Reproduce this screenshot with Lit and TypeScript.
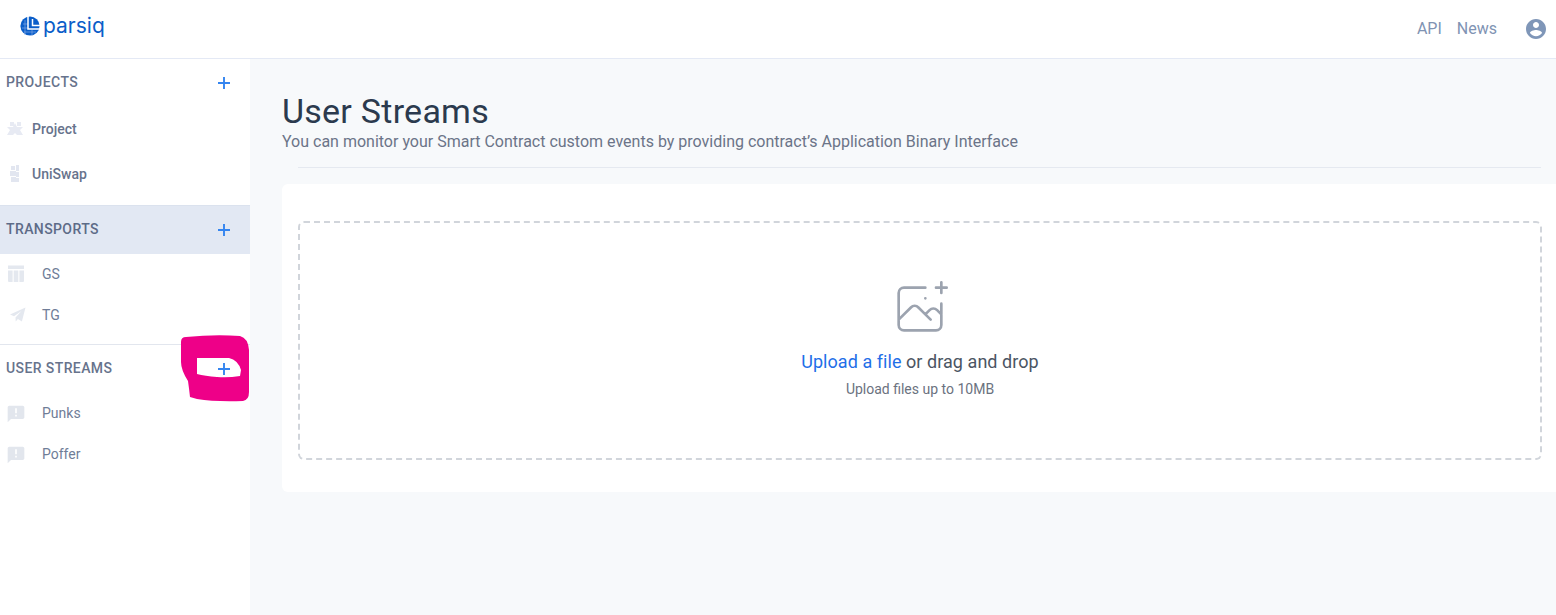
import { LitElement, html, css, svg } from "lit";
import { customElement } from "lit/decorators.js";

const plus = html`<svg class="plus" viewBox="0 0 14 14" width="14" height="14"><path d="M7 1v12M1 7h12" stroke="#3485f0" stroke-width="1.9" fill="none"/></svg>`;

const alertIcon = html`<svg class="ico alert" viewBox="0 0 24 24" width="20" height="20"><path fill="#e2e6ed" d="M20 2H4c-1.1 0-1.99.9-1.99 2L2 22l4-4h14c1.1 0 2-.9 2-2V4c0-1.1-.9-2-2-2zm-7 9h-2V5h2v6zm0 4h-2v-2h2v2z"/></svg>`;

const tableIcon = html`<svg class="ico" viewBox="0 0 20 20" width="20" height="20"><path fill="#e4e8ef" d="M2 1.5h16v3.5H2zM2 6.5h4.6V18H3a1 1 0 0 1-1-1zM7.7 6.5h4.6V18H7.7zM13.4 6.5H18V17a1 1 0 0 1-1 1h-3.6z"/></svg>`;

const planeIcon = html`<svg class="ico" viewBox="0 0 20 20" width="20" height="20"><path fill="#e4e8ef" d="M19.5 2.5 4 9.5l4 1.8L15.5 6l-6 6.6.2 4 2.2-2.6 4 2.4z"/></svg>`;

const puzzleIcon = html`<svg class="pico" viewBox="0 0 20 20" width="20" height="20"><g fill="#e7eaf3"><path d="M2 8h6l2-4 2 4h6l-3 3 3 5h-6l-2-2-2 2H2l3-5z"/><rect x="5" y="3" width="4" height="4"/><rect x="12" y="3" width="4" height="4"/></g></svg>`;

const swapIcon = html`<svg class="pico" viewBox="0 0 20 20" width="20" height="20"><g fill="#e2e6f0"><path d="M6 2h4v4H6zM11 1h3v6h-3zM5 7h6v5H5zM11 8h3v5h-3zM6 13h5v5H6zM11 14h3v4h-3z"/></g></svg>`;

@customElement("app-root")
export class AppRoot extends LitElement {
  static styles = css`
    :host {
      display: flex;
      flex-direction: column;
      height: 100vh;
      overflow: hidden;
      position: relative;
      font-family: Roboto, "Liberation Sans", sans-serif;
      background: #fff;
    }
    header {
      height: 58px;
      flex: none;
      box-sizing: content-box;
      border-bottom: 1px solid #e4e9f5;
      display: flex;
      align-items: center;
      justify-content: space-between;
      padding: 0 8px 0 20px;
    }
    .logo {
      display: flex;
      align-items: center;
      gap: 3px;
      color: #0b5ec9;
      font-family: Inter, Roboto, sans-serif;
      font-size: 21px;
      line-height: 20px;
      padding-bottom: 9px;
    }
    .logo svg { display: block; margin-top: 2px; }
    .logo span { margin-top: 3px; }
    .top {
      display: flex;
      align-items: center;
      color: #8093b3;
      font-size: 16px;
      padding-bottom: 1px;
    }
    .top span { margin-right: 15px; }
    .top svg { display: block; margin-left: 12px; }
    .body { flex: 1; display: flex; min-height: 0; }
    aside {
      width: 250px;
      flex: none;
      display: flex;
      flex-direction: column;
      background: #fff;
    }
    .head {
      display: flex;
      align-items: center;
      justify-content: space-between;
      padding: 0 19px 0 6px;
      font-size: 14px;
      font-weight: 500;
      letter-spacing: 0.4px;
      color: #67738c;
    }
    .plus { display: block; margin-top: 2px; }
    .h1 { height: 46px; }
    .h2 {
      height: 46px;
      padding-bottom: 2px;
      background: #e2e8f3;
      border-top: 1px solid #dbe2ee;
      color: #5d6b87;
    }
    .h3 {
      height: 45px;
      padding-bottom: 2px;
      border-top: 1px solid #e2e6ee;
      color: #67738c;
    }
    .proj {
      display: flex;
      align-items: center;
      height: 44px;
      padding-left: 5px;
      gap: 7px;
      font-size: 14px;
      font-weight: 500;
      color: #67738c;
    }
    .plist {
      display: flex;
      flex-direction: column;
      gap: 1px;
      padding: 2px 0 9px;
    }
    .item {
      display: flex;
      align-items: center;
      height: 41px;
      padding-left: 6px;
      gap: 16px;
      font-size: 14px;
      color: #6f7d97;
    }
    .tlist { padding: 0 0 8px; }
    .tlist .item { height: 40px; padding-bottom: 1px; }
    .ico { display: block; flex: none; }
    .alert { margin-top: 2px; }
    .pico { display: block; flex: none; filter: blur(0.6px); }
    main {
      flex: 1;
      min-width: 0;
      background: #f7f9fb;
      padding: 34px 0 0 32px;
      display: flex;
      flex-direction: column;
    }
    h1 {
      margin: 0;
      font-size: 34px;
      font-weight: 400;
      line-height: 37px;
      letter-spacing: 0.25px;
      color: #2b3a4e;
    }
    .sub {
      font-size: 16px;
      line-height: 24px;
      color: #6b7488;
    }
    .rule {
      height: 1px;
      background: #e5e9f0;
      margin: 13px 15px 16px 16px;
    }
    .card {
      background: #fff;
      border-radius: 6px 0 0 6px;
      padding: 37px 14px 32px 16px;
    }
    .drop {
      height: 235px;
      border: 2px dashed #d1d5db;
      border-radius: 6px;
      display: flex;
      flex-direction: column;
      align-items: center;
    }
    .drop svg { display: block; margin-top: 54px; }
    .line {
      font-size: 18px;
      line-height: 28px;
      letter-spacing: 0.05px;
      color: #4b5563;
      margin-top: 7px;
    }
    .line a { color: #1f6fe8; text-decoration: none; }
    .small {
      font-size: 14px;
      line-height: 20px;
      color: #6b7280;
      margin-top: 3px;
    }
    .scribble {
      position: absolute;
      left: 0;
      top: 0;
      pointer-events: none;
    }
  `;

  render() {
    return html`
      <header>
        <div class="logo">
          <svg viewBox="0 0 20 20" width="20" height="20">
            <circle cx="10" cy="10" r="9.6" fill="#0b5ec9"/>
            <path d="M3 8h5M2 12h6M4 16h12M12 14v6M5 4v15" stroke="#7fa8e4" stroke-width="0.7" fill="none"/>
            <path d="M8 0v13h12M12.5 3v6.5h8" stroke="#fff" stroke-width="1.5" fill="none"/>
          </svg>
          <span>parsiq</span>
        </div>
        <div class="top">
          <span>API</span><span>News</span>
          <svg viewBox="0 0 24 24" width="24" height="24"><path fill="#7f96b8" d="M12 2C6.48 2 2 6.48 2 12s4.48 10 10 10 10-4.48 10-10S17.52 2 12 2zm0 3c1.66 0 3 1.34 3 3s-1.34 3-3 3-3-1.34-3-3 1.34-3 3-3zm0 14.2c-2.5 0-4.71-1.28-6-3.22.03-1.99 4-3.08 6-3.08 1.99 0 5.97 1.09 6 3.08-1.29 1.94-3.5 3.22-6 3.22z"/></svg>
        </div>
      </header>
      <div class="body">
        <aside>
          <div class="head h1"><span>PROJECTS</span>${plus}</div>
          <div class="plist">
            <div class="proj">${puzzleIcon}<span>Project</span></div>
            <div class="proj">${swapIcon}<span>UniSwap</span></div>
          </div>
          <div class="head h2"><span>TRANSPORTS</span>${plus}</div>
          <div class="tlist">
            <div class="item">${tableIcon}<span>GS</span></div>
            <div class="item">${planeIcon}<span>TG</span></div>
          </div>
          <div class="head h3"><span>USER STREAMS</span>${plus}</div>
          <div>
            <div class="item">${alertIcon}<span>Punks</span></div>
            <div class="item">${alertIcon}<span>Poffer</span></div>
          </div>
        </aside>
        <main>
          <h1>User Streams</h1>
          <div class="sub">You can monitor your Smart Contract custom events by providing contract’s Application Binary Interface</div>
          <div class="rule"></div>
          <div class="card">
            <div class="drop">
              <svg viewBox="0 0 48 48" width="64" height="64" fill="none" stroke="#9ca3af" stroke-width="2" stroke-linecap="round" stroke-linejoin="round">
                <path d="M28 8H12a4 4 0 00-4 4v20m32-12v8m0 0v8a4 4 0 01-4 4H12a4 4 0 01-4-4v-4m32-4l-3.172-3.172a4 4 0 00-5.656 0L28 28M8 32l9.172-9.172a4 4 0 015.656 0L28 28m0 0l4 4m4-24h8m-4-4v8m-12 4h.02"/>
              </svg>
              <div class="line"><a>Upload a file</a> or drag and drop</div>
              <div class="small">Upload files up to 10MB</div>
            </div>
          </div>
        </main>
      </div>
      <svg class="scribble" width="1556" height="615" viewBox="0 0 1556 615">
        ${svg`<path fill="#ee0088" fill-rule="evenodd" d="M186 337 Q215 334 240 336 Q248 338 249 350 L249 392 Q249 400 243 401 Q215 402 197 399 L190 397 Q189 388 188 381 Q181 370 181 362 L181 342 Q181 337 186 337 Z M197 358 L229 358 Q238 360 241 370 L240 376 Q228 378 217 377 Q205 376 197 374 Z"/>`}
      </svg>
    `;
  }
}
